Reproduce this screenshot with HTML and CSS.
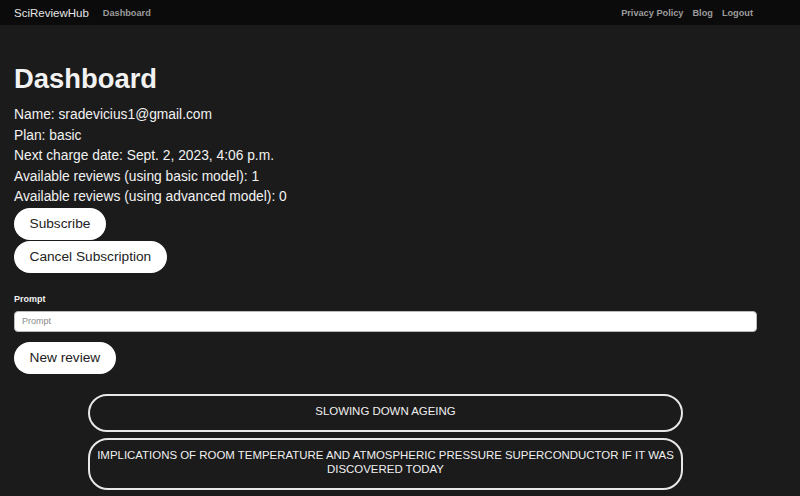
FILE: index.html
```html
<!DOCTYPE html>
<html lang="en">
<head>
    <meta charset="UTF-8">
    <meta name="viewport" content="width=device-width, initial-scale=1.0">
    <title>Dashboard - SciReviewHub</title>
    <link rel="stylesheet" href="styles.css">
</head>
<body>
    <nav class="navbar">
        <div class="nav-inner">
            <a href="#" class="brand">SciReviewHub</a>
            <a href="#" class="nav-link">Dashboard</a>
            <div class="nav-right">
                <a href="#" class="nav-link">Privacy Policy</a>
                <a href="#" class="nav-link">Blog</a>
                <a href="#" class="nav-link">Logout</a>
            </div>
        </div>
    </nav>

    <main class="content">
        <h1>Dashboard</h1>
        <div class="account">
            <p>Name: sradevicius1@gmail.com</p>
            <p>Plan: basic</p>
            <p>Next charge date: Sept. 2, 2023, 4:06 p.m.</p>
            <p>Available reviews (using basic model): 1</p>
            <p>Available reviews (using advanced model): 0</p>
        </div>

        <div class="actions">
            <button class="pill">Subscribe</button>
            <button class="pill">Cancel Subscription</button>
        </div>

        <form class="review-form">
            <label for="prompt">Prompt</label>
            <input type="text" id="prompt" name="prompt" placeholder="Prompt">
            <button type="submit" class="pill">New review</button>
        </form>

        <div class="reviews">
            <a href="#" class="review">Slowing down ageing</a>
            <a href="#" class="review">Implications of room temperature and atmospheric pressure superconductor if it was discovered today</a>
        </div>
    </main>
</body>
</html>
```

FILE: styles.css
```css
body {
    margin: 0;
    background-color: #1b1b1b;
    color: #f2f2f2;
    font-family: 'Liberation Sans', Arial, sans-serif;
}

.navbar {
    background-color: #0b0b0b;
    height: 25px;
}

.nav-inner {
    width: 743px;
    height: 25px;
    padding-left: 14px;
    display: flex;
    align-items: center;
}

.navbar a {
    text-decoration: none;
}

.brand {
    color: #e6e6e6;
    font-size: 11.5px;
    margin-right: 14px;
}

.nav-link {
    color: #9c9c9c;
    font-size: 9.2px;
    font-weight: bold;
}

.nav-right {
    margin-left: auto;
    display: flex;
    gap: 9px;
    padding-right: 4px;
}

.content {
    width: 743px;
    padding: 0 14px;
}

h1 {
    font-size: 27.4px;
    line-height: 33px;
    margin: 37px 0 10px;
}

.account p {
    margin: 0;
    font-size: 13.8px;
    line-height: 20.6px;
}

.actions {
    display: flex;
    flex-direction: column;
    align-items: flex-start;
    gap: 1px;
}

.pill {
    background-color: #fff;
    color: #222;
    border: none;
    border-radius: 17px;
    padding: 8px 15.5px;
    font-family: inherit;
    font-size: 13.7px;
    line-height: 16px;
    cursor: pointer;
}

.review-form {
    margin-top: 21px;
    display: flex;
    flex-direction: column;
    align-items: flex-start;
}

.review-form label {
    font-size: 9px;
    font-weight: bold;
    line-height: 11px;
    margin-bottom: 6px;
}

#prompt {
    box-sizing: border-box;
    width: 100%;
    height: 21px;
    padding: 0 7px;
    border: 1px solid #bbb;
    border-radius: 4px;
    font-family: inherit;
    font-size: 9px;
    margin-bottom: 10px;
}

#prompt::placeholder {
    color: #8a8a8a;
}

.reviews {
    margin-top: 20px;
    display: flex;
    flex-direction: column;
    align-items: center;
    gap: 6px;
}

.review {
    box-sizing: border-box;
    width: 80%;
    padding: 8px 2px 12px;
    border: 2px solid #e8e8e8;
    border-radius: 20px;
    color: #f0f0f0;
    text-decoration: none;
    text-align: center;
    text-transform: uppercase;
    font-size: 11.45px;
    line-height: 14px;
}
```
